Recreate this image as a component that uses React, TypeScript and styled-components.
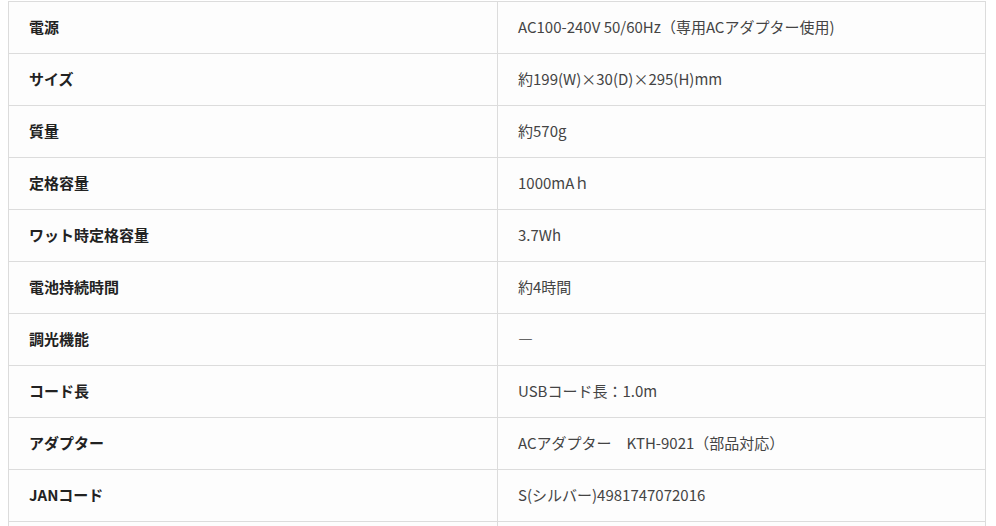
import styled, { createGlobalStyle } from "styled-components";

const GlobalStyle = createGlobalStyle`
  body {
    margin: 0;
    background: #ffffff;
    font-family: "Noto Sans CJK JP", sans-serif;
  }
`;

const Wrapper = styled.div`
  padding: 1px 10px 0 8px;
`;

const Table = styled.table`
  width: 978px;
  border-collapse: collapse;
  table-layout: fixed;
  background: #fdfdfd;
`;

const Row = styled.tr`
  height: 52px;
`;

const Label = styled.th`
  width: 489px;
  box-sizing: border-box;
  padding: 0 20px 3px;
  border: 1px solid #dcdcdc;
  text-align: left;
  font-weight: 700;
  font-size: 15px;
  color: #222;
  font-family: "Noto Sans CJK JP", sans-serif;
`;

const Value = styled.td`
  box-sizing: border-box;
  padding: 0 20px 3px;
  border: 1px solid #dcdcdc;
  font-size: 15px;
  font-weight: 400;
  color: #444;
  font-family: "Noto Sans CJK JP", sans-serif;
`;

const specs: [string, string][] = [
  ["電源", "AC100-240V 50/60Hz（専用ACアダプター使用)"],
  ["サイズ", "約199(W)×30(D)×295(H)mm"],
  ["質量", "約570g"],
  ["定格容量", "1000mAｈ"],
  ["ワット時定格容量", "3.7Wh"],
  ["電池持続時間", "約4時間"],
  ["調光機能", "―"],
  ["コード長", "USBコード長：1.0m"],
  ["アダプター", "ACアダプター　KTH-9021（部品対応）"],
  ["JANコード", "S(シルバー)4981747072016"],
  ["", ""],
];

export default function App() {
  return (
    <>
      <GlobalStyle />
      <Wrapper>
        <Table>
          <tbody>
            {specs.map(([label, value], i) => (
              <Row key={i}>
                <Label>{label}</Label>
                <Value>{value}</Value>
              </Row>
            ))}
          </tbody>
        </Table>
      </Wrapper>
    </>
  );
}
